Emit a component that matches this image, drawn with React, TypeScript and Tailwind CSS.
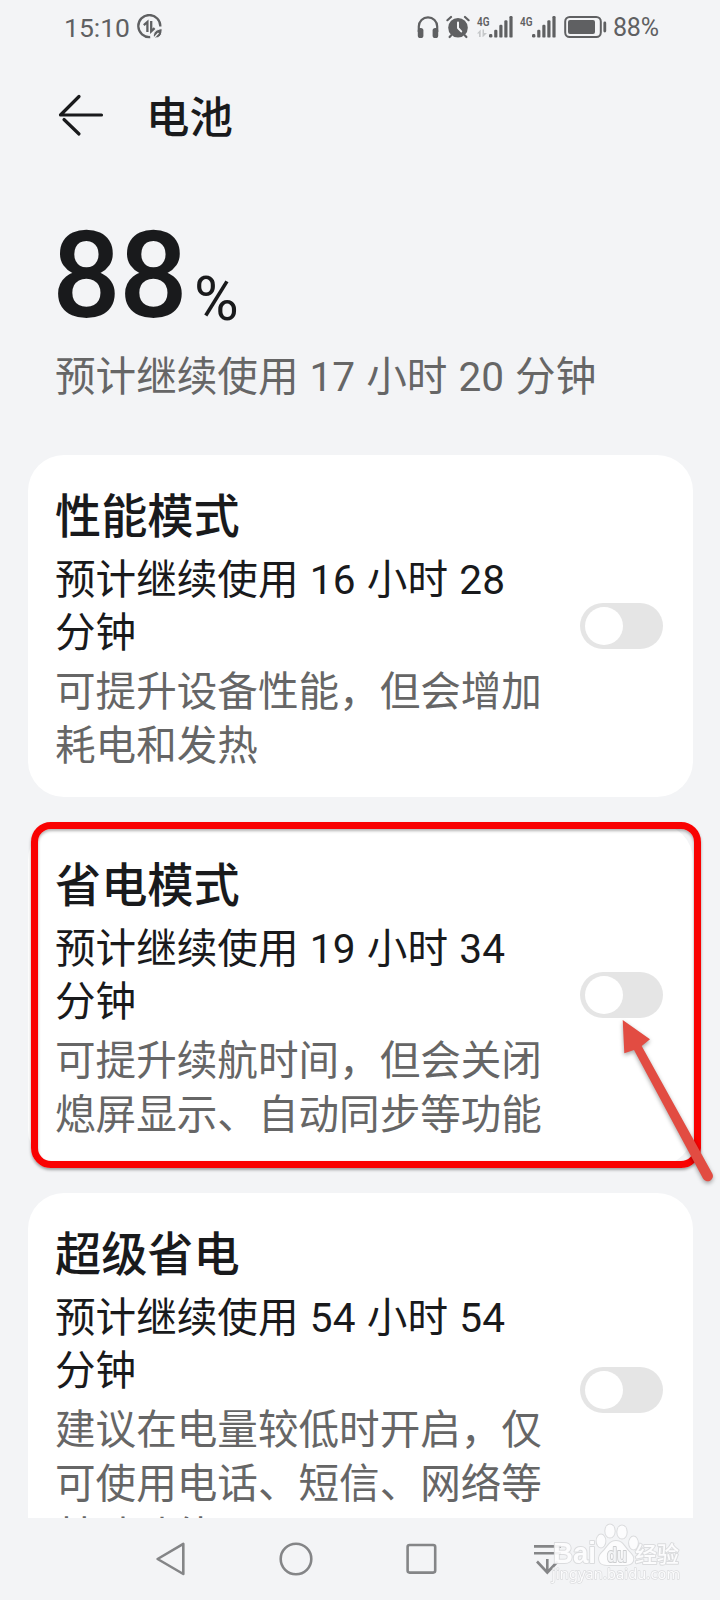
import React from 'react';

const sans = "font-[Roboto,'Noto_Sans_CJK_SC',sans-serif]";

function SaverIcon() {
  return (
    <svg className="h-[26px] w-[26px]" viewBox="0 0 26 26" fill="none" stroke="#5f6062">
      <path d="M13.200 23A11 11 0 1 1 23.300 12.500" strokeWidth="2.300" />
      <path d="M6.800 11.200 10.400 8V18M14.200 7V17.400L17.600 14.200" strokeWidth="2.300" />
      <path d="M25 14.500c.6 6.500-2.400 10.500-8.500 9.200-.8-5.600 2.500-8.200 8.500-9.200Z" fill="#5f6062" stroke="#f3f4f6" strokeWidth="1" />
      <path d="M15.500 25.500 21.500 19" stroke="#f3f4f6" strokeWidth="1.300" />
    </svg>
  );
}

function Headphones() {
  return (
    <svg className="h-[24px] w-[22px]" viewBox="0 0 22 24">
      <path d="M1.800 17V11.500a9.200 9.200 0 0 1 18.400 0V17" fill="none" stroke="#5f6062" strokeWidth="2.200" />
      <rect x="0.800" y="13" width="5.600" height="10" rx="2.600" fill="#5f6062" />
      <rect x="15.600" y="13" width="5.600" height="10" rx="2.600" fill="#5f6062" />
    </svg>
  );
}

function Alarm() {
  return (
    <svg className="h-[24px] w-[24px]" viewBox="0 0 24 24" fill="none" stroke="#5f6062" strokeLinecap="round">
      <circle cx="12" cy="12.800" r="9.800" fill="#5f6062" stroke="none" />
      <path d="M1.400 5.200 5 2M22.600 5.200 19 2" strokeWidth="2.200" />
      <path d="M5 20.500 3.600 22M19 20.500 20.400 22" strokeWidth="2.200" />
      <path d="M12 7.500V13l3.200 3.400" stroke="#f3f4f6" strokeWidth="2" strokeLinejoin="round" />
    </svg>
  );
}

function Signal({ data }: { data?: boolean }) {
  return (
    <svg className="h-[24px] w-[36px] overflow-visible" viewBox="0 0 36 24">
      <text x="0" y="11" fontFamily="Roboto, sans-serif" fontWeight="600" fontSize="13.500" textLength="12.500" lengthAdjust="spacingAndGlyphs" fill="#5f6062">4G</text>
      {data && <path d="M0 18.500 3.700 14.500V22H2V18.500ZM5.500 14.500H7V18H10L6 22H5.500Z" fill="#c6c8ca" />}
      <g fill="#5f6062">
        <rect x="12" y="19" width="3.400" height="3.600" rx="1.400" />
        <rect x="17.200" y="14.800" width="3.200" height="7.800" rx="1.200" />
        <rect x="22.300" y="9.800" width="3.200" height="12.800" rx="1.200" />
        <rect x="27.300" y="5.200" width="3.200" height="17.400" rx="1.200" />
        <rect x="32.400" y="1" width="3.200" height="21.600" rx="1.200" />
      </g>
    </svg>
  );
}

function Battery() {
  return (
    <svg className="h-[24px] w-[43px]" viewBox="0 0 43 24">
      <rect x="1.200" y="2" width="35.600" height="20" rx="4.500" fill="none" stroke="#5f6062" strokeWidth="2" />
      <rect x="4" y="5" width="27" height="14" rx="2" fill="#5f6062" />
      <rect x="39.400" y="6.500" width="2.800" height="11" rx="1.400" fill="#5f6062" />
    </svg>
  );
}

function StatusBar() {
  return (
    <div className="flex h-[54px] shrink-0 items-center pr-[61px] pl-[64px] text-[#5f6062]">
      <span className="w-[66px] pt-[2px] text-[26.500px] leading-[54px] whitespace-nowrap">15:10</span>
      <div className="ml-[7px]"><SaverIcon /></div>
      <div className="ml-auto flex items-center">
        <Headphones />
        <div className="ml-[7px]"><Alarm /></div>
        <div className="ml-[7px]"><Signal data /></div>
        <div className="ml-[7px]"><Signal /></div>
        <div className="ml-[8px]"><Battery /></div>
        <span className="ml-[6px] w-[46px] pt-[2px] text-[25px] leading-[54px] tracking-[-0.2px] whitespace-nowrap">88%</span>
      </div>
    </div>
  );
}

function Switch() {
  return (
    <button role="switch" aria-checked="false" className="mb-[5.600px] flex h-[46px] w-[83px] shrink-0 items-center rounded-full bg-[#e5e5e5] pl-[4.500px]">
      <span className="h-[38px] w-[38px] rounded-full bg-white" />
    </button>
  );
}

type Mode = { title: string; time: string[]; desc: string[] };

const modes: Mode[] = [
  { title: '性能模式', time: ['预计继续使用 16 小时 28', '分钟'], desc: ['可提升设备性能，但会增加', '耗电和发热'] },
  { title: '省电模式', time: ['预计继续使用 19 小时 34', '分钟'], desc: ['可提升续航时间，但会关闭', '熄屏显示、自动同步等功能'] },
  { title: '超级省电', time: ['预计继续使用 54 小时 54', '分钟'], desc: ['建议在电量较低时开启，仅', '可使用电话、短信、网络等', '基础功能'] },
];

function ModeCard({ title, time, desc }: Mode) {
  return (
    <section className="flex shrink-0 items-center justify-between rounded-[36px] bg-white pt-[28.800px] pr-[29.500px] pb-[24px] pl-[27.500px]">
      <div className="whitespace-nowrap">
        <h2 className="mb-[4px] text-[46.200px] leading-[66px] font-medium text-[#191a1c]">{title}</h2>
        {time.map((line) => (
          <p key={line} className="text-[40.600px] leading-[53.300px] text-[#191a1c] [word-spacing:1.300px]">{line}</p>
        ))}
        <div className="mt-[6px]">
          {desc.map((line) => (
            <p key={line} className="text-[40.600px] leading-[53.300px] text-[#666]">{line}</p>
          ))}
        </div>
      </div>
      <Switch />
    </section>
  );
}

function NavBar() {
  return (
    <nav className="flex h-[82px] shrink-0 items-center pl-[154px]">
      <svg className="h-[36px] w-[34px]" viewBox="0 0 34 36" fill="none" stroke="#848587" strokeWidth="2.600" strokeLinejoin="round">
        <path d="M29.300 2.800V33L3.600 18Z" />
      </svg>
      <svg className="ml-[90px] h-[36px] w-[36px]" viewBox="0 0 36 36" fill="none" stroke="#848587" strokeWidth="2.600">
        <circle cx="18" cy="18" r="15.300" />
      </svg>
      <svg className="ml-[90px] h-[36px] w-[36px]" viewBox="0 0 36 36" fill="none" stroke="#848587" strokeWidth="2.600">
        <rect x="3.600" y="4" width="27.600" height="27.600" rx="2" />
      </svg>
      <svg className="ml-[90px] h-[36px] w-[36px]" viewBox="0 0 36 36" fill="none" stroke="#848587" strokeWidth="2.600">
        <path d="M4 5.400H31M4 12.300H31M17.300 18V32M7 20.500 17.300 31.500 27.600 20.500" />
      </svg>
    </nav>
  );
}

function Watermark() {
  return (
    <svg className="absolute top-[1518px] left-[545px] h-[72px] w-[145px]" viewBox="0 0 145 72" stroke="#d9dadc" fill="#fdfdfe" strokeWidth="2" strokeLinejoin="round" paintOrder="stroke" fontFamily="'Liberation Sans', sans-serif" opacity="0.92">
      <text x="8" y="44.500" fontSize="29" fontWeight="700" textLength="43" lengthAdjust="spacingAndGlyphs">Bai</text>
      <ellipse cx="56" cy="23" rx="4.400" ry="6.400" />
      <ellipse cx="65" cy="13" rx="4.700" ry="6.600" />
      <ellipse cx="77" cy="14" rx="4.700" ry="6.600" />
      <ellipse cx="88.500" cy="25" rx="4.400" ry="6.400" />
      <path d="M71 23c-6 0-8 5-11.500 9-4 4-6.500 6-5 11 1.500 4.500 7 4 16.500 4s15 .5 17-4c1.500-5-2-7-5.500-11C79 28 77 23 71 23Z" />
      <text x="62" y="43.500" fontSize="21" fontWeight="700" fill="#f3f4f6" stroke="#c9cacc" textLength="20" lengthAdjust="spacingAndGlyphs">du</text>
      <text x="90" y="43.500" fontSize="22" fontWeight="500" fontFamily="'Noto Sans CJK SC', sans-serif" textLength="44">经验</text>
      <text x="7" y="61" fontSize="14.500" strokeWidth="1.400" fontFamily="'Noto Sans', sans-serif" textLength="128">jingyan.baidu.com</text>
    </svg>
  );
}

export default function App() {
  return (
    <div className={`relative flex h-[1600px] w-[720px] flex-col overflow-hidden bg-[#f3f4f6] ${sans}`}>
      <StatusBar />
      <header className="flex h-[124px] shrink-0 items-center pl-[57px]">
        <svg className="h-[44px] w-[48px]" viewBox="0 0 48 44" fill="none" stroke="#191a1c" strokeWidth="3.200" strokeLinecap="round" strokeLinejoin="round">
          <path d="M44.500 21H3.500L22 2.500M7 25.500 22 40" />
        </svg>
        <h1 className="ml-[41px] pt-[5px] text-[43.400px] leading-[60px] font-medium text-[#191a1c]">电池</h1>
      </header>
      <div className="flex h-[154px] shrink-0 items-baseline pl-[52px] text-[#191a1c]">
        <span className="text-[121px] leading-[196px] font-medium tracking-[-1.800px]">88</span>
        <span className="mb-[-3px] ml-[8px] translate-y-[3px] text-[61px] leading-[60px]">%</span>
      </div>
      <p className="h-[123px] shrink-0 pl-[55px] text-[40.600px] leading-[90px] whitespace-nowrap text-[#666] [word-spacing:1px]">
        预计继续使用 17 小时 20 分钟
      </p>
      <main className="flex h-[1062.500px] shrink-0 flex-col gap-[27px] overflow-hidden px-[27.500px]">
        {modes.map((mode) => (
          <ModeCard key={mode.title} {...mode} />
        ))}
      </main>
      <NavBar />
      <div className="absolute top-[822px] left-[31px] h-[346px] w-[670px] rounded-[20px] border-[7px] border-[#f90202] shadow-[0_2px_3px_rgba(0,0,0,0.35),inset_0_2px_3px_rgba(0,0,0,0.3)]" />
      <svg className="absolute top-[1010px] left-[612px] h-[180px] w-[108px] drop-shadow-[0_2px_2px_rgba(0,0,0,0.35)]" viewBox="0 0 108 180" fill="#e24c42">
        <path d="M10.700 10 38 29.300 29.700 36 100.300 163.500A5 5 0 0 1 91 168.500L22 40 12.300 43.300Z" />
      </svg>
      <Watermark />
    </div>
  );
}
